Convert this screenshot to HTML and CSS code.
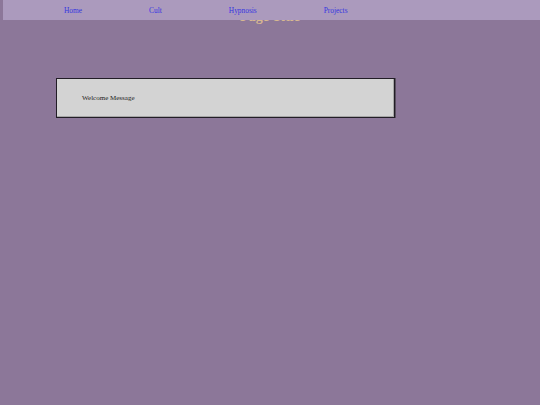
FILE: index.html
```html
<!DOCTYPE html>
<html>
<head>
<meta charset="utf-8">
<link rel="stylesheet" href="styles.css">
</head>
<body>
<h1 class="page-title">Page Title</h1>
<nav class="topnav">
  <a href="#" class="nav-link">Home</a>
  <a href="#" class="nav-link">Cult</a>
  <a href="#" class="nav-link">Hypnosis</a>
  <a href="#" class="nav-link">Projects</a>
</nav>
<main class="content">
  <div class="welcome-box">Welcome Message</div>
</main>
</body>
</html>
```
FILE: styles.css
```css
html, body {
  margin: 0;
  padding: 0;
  background: #8c7799;
  font-family: "Liberation Serif", "Times New Roman", serif;
}
.page-title {
  margin: 9px 0 0;
  font-size: 14px;
  line-height: 15px;
  font-weight: bold;
  color: #d8b890;
  text-align: center;
}
.topnav {
  position: absolute;
  top: 0;
  left: 3px;
  right: 0;
  height: 20px;
  box-sizing: border-box;
  padding-top: 1px;
  background: #ab9abd;
  display: flex;
  align-items: center;
  padding-left: 61px;
  gap: 67px;
}
.nav-link {
  color: #3535e0;
  text-decoration: none;
  font-size: 7.4px;
  line-height: 8px;
}
.content {
  padding: 54px 0 0 56px;
}
.welcome-box {
  box-sizing: border-box;
  width: 339px;
  height: 40px;
  background: #d3d3d3;
  border: 1px solid #221d26;
  box-shadow: inset -1px -1px 0 #a5a5a5, 1px 0 0 #5a5060;
  display: flex;
  align-items: center;
  padding-left: 25px;
  font-size: 7px;
  color: #222;
}
```
